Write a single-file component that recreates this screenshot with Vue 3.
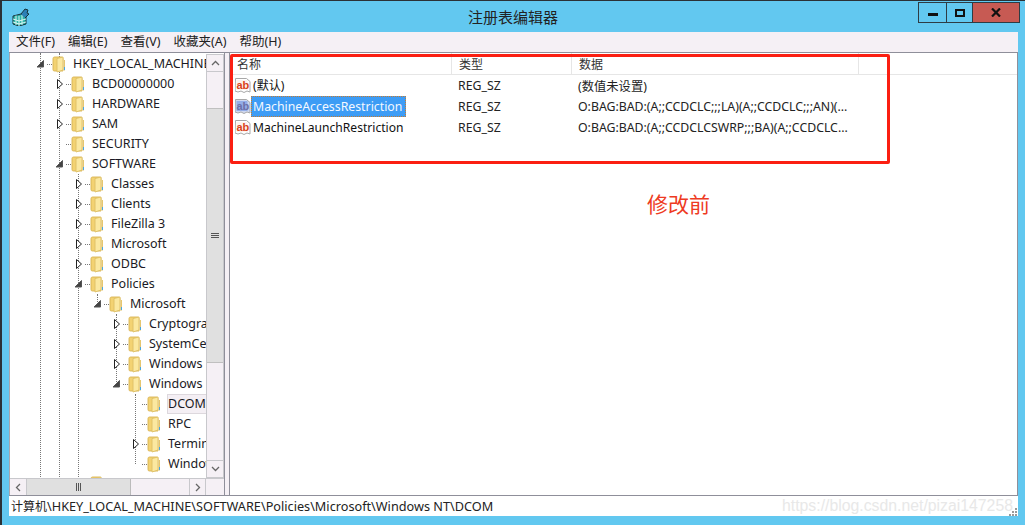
<script setup>
const menus = ['文件(F)', '编辑(E)', '查看(V)', '收藏夹(A)', '帮助(H)']
const nodes = [
  [0, 'e', 'HKEY_LOCAL_MACHINE'], [1, 'c', 'BCD00000000'], [1, 'c', 'HARDWARE'], [1, 'c', 'SAM'],
  [1, '', 'SECURITY'], [1, 'e', 'SOFTWARE'], [2, 'c', 'Classes'], [2, 'c', 'Clients'],
  [2, 'c', 'FileZilla 3'], [2, 'c', 'Microsoft'], [2, 'c', 'ODBC'], [2, 'e', 'Policies'],
  [3, 'e', 'Microsoft'], [4, 'c', 'Cryptography'], [4, 'c', 'SystemCertificates'], [4, 'c', 'Windows'],
  [4, 'e', 'Windows NT'], [5, '', 'DCOM'], [5, '', 'RPC'], [5, 'c', 'Terminal Services'],
  [5, '', 'WindowsFileProtection'], [2, 'c', 'Windows']
].map(([level, state, name]) => ({ level, state, name }))
const guides = [
  { x: 30, top: 0, h: 424 }, { x: 49, top: 0, h: 424 }, { x: 68, top: 121, h: 303 },
  { x: 87, top: 241, h: 10 }, { x: 106, top: 261, h: 70 }, { x: 125, top: 341, h: 70 }
]
const values = [
  { name: '(默认)', type: 'REG_SZ', data: '(数值未设置)' },
  { name: 'MachineAccessRestriction', type: 'REG_SZ', data: 'O:BAG:BAD:(A;;CCDCLC;;;LA)(A;;CCDCLC;;;AN)(...', sel: true },
  { name: 'MachineLaunchRestriction', type: 'REG_SZ', data: 'O:BAG:BAD:(A;;CCDCLCSWRP;;;BA)(A;;CCDCLC...' }
]
</script>

<template>
  <div class="window">
    <header class="titlebar">
      <svg class="appicon" width="18" height="18" viewBox="0 0 18 18">
        <path d="M1 8l8-2 5 2v8l-7 2-6-2z" fill="#2fb4a8" stroke="#17333a" />
        <path d="M1 11l6 2 7-2M1 14l6 2 7-2M4 7.500v9.500M7 8v10M10 7v10" stroke="#e8fbf8" fill="none" stroke-width=".9" />
        <path d="M9 6l4-5 3 1-1 3 2 1-4 4" fill="#2c7fb5" stroke="#17333a" />
      </svg>
      <div class="title">注册表编辑器</div>
      <div class="controls">
        <div class="ctl min"><i></i></div>
        <div class="ctl max"><i></i></div>
        <div class="ctl close">
          <svg width="10" height="9" viewBox="0 0 10 9"><path d="M1 .5l8 8M9 .5l-8 8" stroke="#111" stroke-width="2.2" /></svg>
        </div>
      </div>
    </header>

    <div class="client">
      <nav class="menubar"><span v-for="m in menus" :key="m">{{ m }}</span></nav>
      <div class="panes">
        <aside class="treepane">
          <div class="treeview">
            <div class="viewport">
              <span v-for="g in guides" :key="g.x + '-' + g.top" class="guide" :style="{ left: g.x + 'px', top: g.top + 'px', height: g.h + 'px' }"></span>
              <div v-for="(n, i) in nodes" :key="i" class="node" :style="{ paddingLeft: 26 + n.level * 19 + 'px' }">
                <svg class="exp" width="10" height="20" viewBox="0 0 10 20">
                  <path v-if="n.state === 'c'" d="M2.500 5.500l5 4.500-5 4.500z" fill="#fff" stroke="#222" />
                  <path v-else-if="n.state === 'e'" d="M7.500 6.500v6.500h-6.500z" fill="#444" stroke="#555" />
                </svg>
                <span class="conn"></span>
                <svg class="folder" width="14" height="18" viewBox="0 0 14 18">
                  <path d="M1 3.500c0-1 .8-1.500 1.500-1.500h7c1 0 1.500.5 1.500 1.500v12.500h-8.500c-1 0-1.500-.5-1.500-1.500z" fill="#f3d272" stroke="#d8b354" stroke-width=".9" />
                  <path d="M5 3.500l6-1.500v13l-6 2z" fill="#fbe8a0" stroke="#dfc064" stroke-width=".9" />
                  <path d="M12.500 5v10.500" stroke="#e5c670" />
                  <path d="M12.500 12v3" stroke="#4ba6dc" />
                </svg>
                <span class="label" :class="{ current: n.name === 'DCOM' }">{{ n.name }}</span>
              </div>
            </div>
            <div class="vscroll">
              <button class="sbtn"><svg width="9" height="6" viewBox="0 0 9 6"><path d="M1 5l3.500-3.500L8 5" fill="none" stroke="#666" stroke-width="1.300" /></svg></button>
              <div class="vtrack"><div class="vthumb"><b></b><b></b><b></b></div></div>
              <button class="sbtn"><svg width="9" height="6" viewBox="0 0 9 6"><path d="M1 1l3.500 3.500L8 1" fill="none" stroke="#666" stroke-width="1.300" /></svg></button>
            </div>
          </div>
          <div class="hscroll">
            <button class="hbtn"><svg width="6" height="9" viewBox="0 0 6 9"><path d="M5 1L1.500 4.500 5 8" fill="none" stroke="#666" stroke-width="1.300" /></svg></button>
            <div class="hthumb"><b></b><b></b><b></b></div>
            <div class="htrack"></div>
            <button class="hbtn last"><svg width="6" height="9" viewBox="0 0 6 9"><path d="M1 1l3.500 3.500L1 8" fill="none" stroke="#666" stroke-width="1.300" /></svg></button>
          </div>
        </aside>
        <div class="splitter"></div>
        <main class="listpane">
          <div class="head">
            <span class="c1">名称</span><span class="c2">类型</span><span class="c3">数据</span><span class="c4"></span>
          </div>
          <div v-for="v in values" :key="v.name" class="row">
            <div class="c1 namecell">
              <svg class="ab" width="16" height="17" viewBox="0 0 16 17">
                <path d="M.5 1.500h11l3.500 3v10.500l-3-1-3 1.500-3-1.500-3 1-3-1z" :fill="v.sel ? '#cfd8f0' : '#fff'" stroke="#a8a8a8" />
                <rect x="1.500" y="3" width="11" height="10" :fill="v.sel ? '#94aee8' : '#fdf3ee'" />
                <text x="1.500" y="11.500" class="abtext" :class="{ dim: v.sel }">ab</text>
              </svg>
              <span class="vname" :class="{ selected: v.sel }">{{ v.name }}</span>
            </div>
            <span class="c2">{{ v.type }}</span>
            <span class="c3">{{ v.data }}</span>
          </div>
          <div class="redbox"></div>
          <div class="note">修改前</div>
        </main>
      </div>
      <footer class="status">
        <span><span class="cjk">计算机</span>\HKEY_LOCAL_MACHINE\SOFTWARE\Policies\Microsoft\Windows NT\DCOM</span>
        <span class="mark">https://blog.csdn.net/pizai147258</span>
        <svg class="grip" width="8" height="8" viewBox="0 0 8 8"><path d="M6 0h2v2H6zM3 3h2v2H3zM6 3h2v2H6zM0 6h2v2H0zM3 6h2v2H3zM6 6h2v2H6z" fill="#999" /></svg>
      </footer>
    </div>
  </div>
</template>

<style scoped>
.window {
  width: 1025px; height: 525px; box-sizing: border-box; overflow: hidden;
  background: #62c8f0; border-left: 2px solid #2b3136; border-top: 1px solid #2b3136;
  display: flex; flex-direction: column;
  font-family: "Noto Sans", "Noto Sans CJK SC", sans-serif; font-size: 12.5px; color: #111;
}
.titlebar { height: 31px; flex: none; display: flex; align-items: flex-start; position: relative; }
.appicon { margin: 7px 0 0 10px; }
.title {
  position: absolute; left: 466px; top: 6px; font-size: 15px; line-height: 20px; color: #222;
  font-family: "Noto Sans CJK SC", sans-serif;
}
.controls { margin: 1px 0 0 auto; margin-right: 5px; display: flex; height: 21px; border: 1px solid #2e3c44; box-sizing: border-box; }
.ctl { display: flex; align-items: center; justify-content: center; }
.min { width: 27px; border-right: 1px solid #2e3c44; }
.min i { display: block; width: 10px; height: 3px; background: #111; margin-top: 4px; }
.max { width: 25px; border-right: 1px solid #2e3c44; }
.max i { display: block; width: 6px; height: 4px; border: 2px solid #111; }
.close { width: 46px; background: #c75a53; }
.client { margin: 0 7px 9px 7px; flex: 1; display: flex; flex-direction: column; min-height: 0; background: #f5f0f5; }
.menubar { height: 20px; box-sizing: border-box; padding: 0 0 3px 7px; flex: none; display: flex; gap: 13px; align-items: center; font-size: 12.500px; color: #222; }
.panes { flex: 1; min-height: 0; display: flex; border-top: 1px solid #8f8f9a; border-bottom: 1px solid #8f8f9a; }
.treepane { width: 214px; flex: none; display: flex; flex-direction: column; border-left: 1px solid #a8a8b0; border-right: 1px solid #8f8f9a; background: #fff; }
.treeview { flex: 1; min-height: 0; display: flex; }
.viewport { position: relative; width: 196px; flex: none; overflow: hidden; padding-top: 1px; box-sizing: border-box; }
.guide { position: absolute; width: 0; border-left: 1px dotted #777; }
.node { height: 20px; display: flex; align-items: center; position: relative; white-space: nowrap; }
.exp { flex: none; }
.conn { width: 5px; flex: none; margin-left: 1px; border-top: 1px dotted #777; }
.folder { flex: none; margin-right: 7px; }
.label { color: #1a1a24; font-size: 12.500px; line-height: 18px; }
.label.current { background: #f4eff4; outline: 1px solid #ddd8dd; padding-right: 4px; }
.vscroll { width: 16px; flex: none; margin-top: 1px; display: flex; flex-direction: column; background: #f5f0f5; border: 1px solid #c8c8cc; }
.sbtn { height: 16px; padding: 0; border: 0; background: #f5f0f5; display: flex; align-items: center; justify-content: center; flex: none; }
.vtrack { flex: 1; min-height: 0; padding-top: 36px; padding-bottom: 97px; display: flex; border-top: 1px solid #c8c8cc; border-bottom: 1px solid #c8c8cc; }
.vthumb { flex: 1; background: #e0e0e0; border-top: 1px solid #c0c0c0; border-bottom: 1px solid #c0c0c0; display: flex; flex-direction: column; gap: 1px; align-items: center; justify-content: center; }
.vthumb b { display: block; width: 8px; height: 1px; background: #555; }
.hscroll { height: 17px; flex: none; display: flex; background: #f5f0f5; border-top: 1px solid #c8c8cc; box-sizing: border-box; }
.hbtn { width: 17px; padding: 0; background: #f5f0f5; border: 0; border-right: 1px solid #c8c8cc; display: flex; align-items: center; justify-content: center; flex: none; }
.hbtn.last { border-left: 1px solid #c8c8cc; margin-right: 18px; }
.hthumb { width: 104px; flex: none; background: #e0e0e0; border-right: 1px solid #bbb; box-sizing: border-box; display: flex; gap: 1px; align-items: center; justify-content: center; }
.hthumb b { display: block; width: 1px; height: 8px; background: #555; }
.htrack { flex: 1; }
.splitter { width: 4px; flex: none; }
.listpane { flex: 1; position: relative; background: #fff; border-left: 1px solid #8f8f9a; border-right: 1px solid #8f8f9a; min-width: 0; }
.head { height: 22px; display: flex; align-items: center; border-bottom: 1px solid #e6e6e6; box-sizing: border-box; color: #333; }
.head span { height: 100%; display: flex; align-items: center; box-sizing: border-box; border-right: 1px solid #e6e6e6; padding-left: 7px; font-size: 12px; }
.c1 { width: 222px; flex: none; }
.c2 { width: 120px; flex: none; }
.c3 { width: 287px; flex: none; }
.head .c4 { flex: 1; border-right: 0; }
.row { height: 21px; display: flex; align-items: center; font-size: 12.300px; white-space: nowrap; }
.row > .c2, .row > .c3 { padding-left: 6px; box-sizing: border-box; color: #222; }
.namecell { display: flex; align-items: center; padding-left: 5px; box-sizing: border-box; }
.ab { flex: none; }
.abtext { font: bold 11px "Liberation Sans", sans-serif; fill: #d8431a; }
.abtext.dim { fill: #6c70a8; }
.vname { margin-left: -2px; padding: 0 3px; line-height: 19px; border: 1px dotted transparent; font-size: 12.100px; }
.vname.selected { margin-left: 0; padding: 0 3px 0 1px; font-size: 12.300px; background: #3d9cf5; color: #f4f8ff; border-color: #c77b30; }
.redbox { position: absolute; left: 0; top: 1px; width: 660px; height: 110px; box-sizing: border-box; border: 3px solid #fb1f12; border-radius: 2px; pointer-events: none; }
.note { position: absolute; left: 417px; top: 136px; font: 21px/28px "Noto Sans CJK SC", sans-serif; color: #ee3a22; }
.status { height: 20px; flex: none; background: #fff; position: relative; display: flex; align-items: center; padding-left: 2px; font-size: 12.700px; color: #222; white-space: nowrap; overflow: hidden; }
.cjk { font-size: 12px; }
.mark { position: absolute; left: 773px; top: -1px; font: 15.800px/22px "Liberation Sans", sans-serif; color: #e8e8e8; }
.grip { position: absolute; right: 1px; bottom: 0; }
</style>

<style>
html, body { margin: 0; overflow: hidden; background: #62c8f0; }
</style>
